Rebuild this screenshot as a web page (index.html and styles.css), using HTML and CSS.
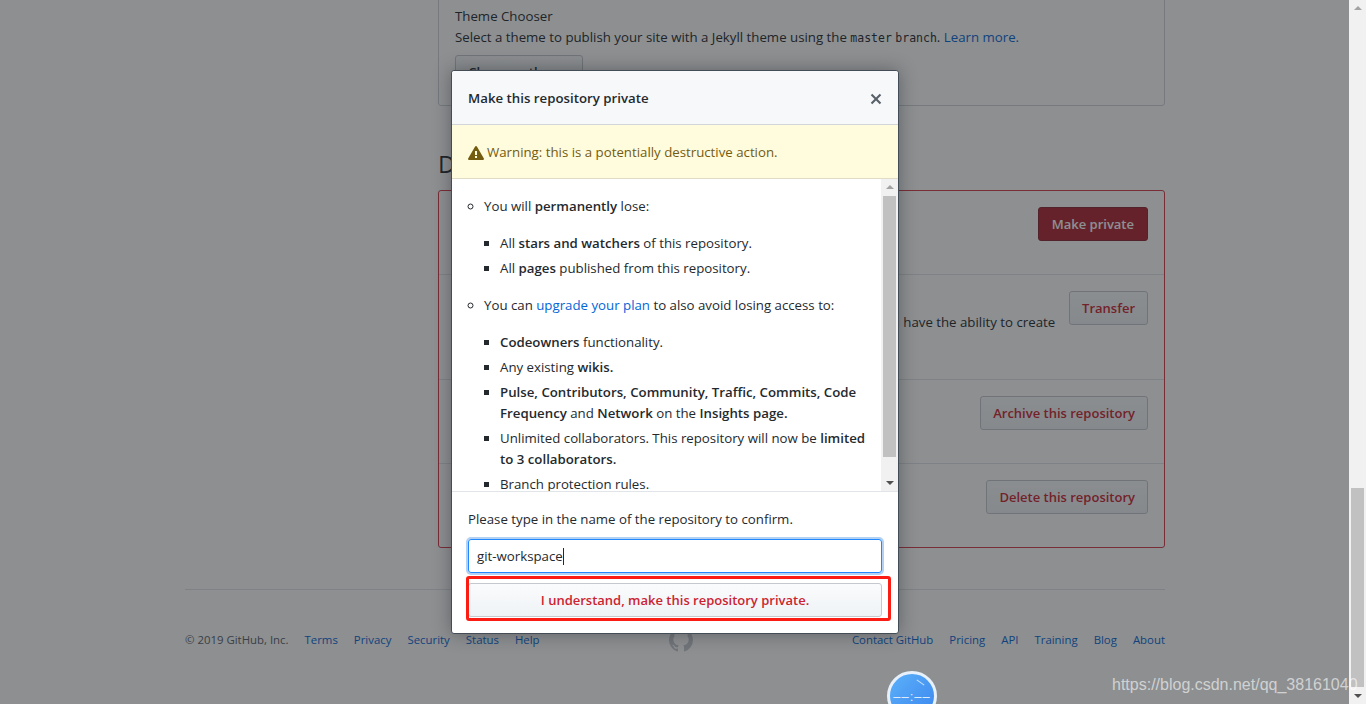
FILE: index.html
```html
<!DOCTYPE html>
<html lang="en">
<head>
  <meta charset="UTF-8">
  <title>Options</title>
  <link rel="stylesheet" href="styles.css">
</head>
<body>
  <div class="page">
    <div class="settings">
      <div class="box pages-box">
        <h4 class="row-title">Theme Chooser</h4>
        <p class="row-text">Select a theme to publish your site with a Jekyll theme using the <code>master</code> <code>branch</code>. <a href="#">Learn more.</a></p>
        <button class="btn">Choose a theme</button>
      </div>

      <h2 class="danger-title">Danger Zone</h2>
      <div class="box danger-box">
        <div class="danger-row">
          <div class="danger-info">
            <h4 class="row-title">Make this repository private</h4>
            <p class="row-text">Hide this repository from the public.</p>
          </div>
          <button class="btn btn-danger-solid">Make private</button>
        </div>
        <div class="danger-row">
          <div class="danger-info">
            <h4 class="row-title">Transfer ownership</h4>
            <p class="row-text">Transfer this repository to another user or to an organization where you have the ability to create repositories.</p>
          </div>
          <button class="btn btn-danger">Transfer</button>
        </div>
        <div class="danger-row">
          <div class="danger-info">
            <h4 class="row-title">Archive this repository</h4>
            <p class="row-text">Mark this repository as archived and read-only.</p>
          </div>
          <button class="btn btn-danger">Archive this repository</button>
        </div>
        <div class="danger-row">
          <div class="danger-info">
            <h4 class="row-title">Delete this repository</h4>
            <p class="row-text">Once you delete a repository, there is no going back.</p>
          </div>
          <button class="btn btn-danger">Delete this repository</button>
        </div>
      </div>
    </div>

    <footer class="footer">
      <div class="footer-links">
        <span>© 2019 GitHub, Inc.</span>
        <a href="#">Terms</a>
        <a href="#">Privacy</a>
        <a href="#">Security</a>
        <a href="#">Status</a>
        <a href="#">Help</a>
      </div>
      <svg class="footer-mark" viewBox="0 0 16 16" width="24" height="24">
        <path d="M8 0C3.58 0 0 3.58 0 8c0 3.54 2.29 6.53 5.47 7.59.4.07.55-.17.55-.38 0-.19-.01-.82-.01-1.49-2.01.37-2.53-.49-2.69-.94-.09-.23-.48-.94-.82-1.13-.28-.15-.68-.52-.01-.53.63-.01 1.08.58 1.23.82.72 1.21 1.87.87 2.33.66.07-.52.28-.87.51-1.07-1.78-.2-3.64-.89-3.64-3.95 0-.87.31-1.59.82-2.15-.08-.2-.36-1.02.08-2.12 0 0 .67-.21 2.2.82.64-.18 1.32-.27 2-.27.68 0 1.36.09 2 .27 1.53-1.04 2.2-.82 2.2-.82.44 1.1.16 1.92.08 2.12.51.56.82 1.27.82 2.15 0 3.07-1.87 3.75-3.65 3.95.29.25.54.73.54 1.48 0 1.07-.01 1.93-.01 2.2 0 .21.15.46.55.38A8.013 8.013 0 0016 8c0-4.42-3.58-8-8-8z"/>
      </svg>
      <div class="footer-links">
        <a href="#">Contact GitHub</a>
        <a href="#">Pricing</a>
        <a href="#">API</a>
        <a href="#">Training</a>
        <a href="#">Blog</a>
        <a href="#">About</a>
      </div>
    </footer>
  </div>

  <div class="overlay"></div>

  <div class="modal">
    <div class="modal-head">
      <h3>Make this repository private</h3>
      <svg class="modal-close" viewBox="0 0 12 16" width="12" height="16">
        <path d="M7.48 8l3.75 3.75-1.48 1.48L6 9.48l-3.75 3.75-1.48-1.48L4.52 8 .77 4.25l1.48-1.48L6 6.52l3.75-3.75 1.48 1.48L7.48 8z"/>
      </svg>
    </div>
    <div class="modal-warn">
      <svg viewBox="0 0 16 16" width="16" height="16">
        <path d="M8.893 1.5c-.183-.31-.52-.5-.887-.5s-.703.19-.886.5L.138 13.499a.98.98 0 000 1.001c.193.31.53.501.886.501h13.964c.367 0 .704-.19.877-.5a1.03 1.03 0 00.01-1.002L8.893 1.5zm.133 11.497H6.987v-2.003h2.039v2.003zm0-3.004H6.987V5.987h2.039v4.006z"/>
      </svg>
      <span>Warning: this is a potentially destructive action.</span>
    </div>
    <div class="modal-scroll">
      <div class="modal-body">
        <ul class="lose-list">
          <li>You will <b>permanently</b> lose:
            <ul>
              <li>All <b>stars and watchers</b> of this repository.</li>
              <li>All <b>pages</b> published from this repository.</li>
            </ul>
          </li>
          <li>You can <a href="#">upgrade your plan</a> to also avoid losing access to:
            <ul>
              <li><b>Codeowners</b> functionality.</li>
              <li>Any existing <b>wikis.</b></li>
              <li><b>Pulse, Contributors, Community, Traffic, Commits, Code Frequency</b> and <b>Network</b> on the <b>Insights page.</b></li>
              <li>Unlimited collaborators. This repository will now be <b>limited to 3 collaborators.</b></li>
              <li>Branch protection rules.</li>
            </ul>
          </li>
        </ul>
      </div>
      <div class="scrollbar modal-scrollbar">
        <span class="arrow-up"></span>
        <div class="thumb-track"><div class="thumb"></div></div>
        <span class="arrow-down"></span>
      </div>
    </div>
    <div class="modal-foot">
      <p>Please type in the name of the repository to confirm.</p>
      <div class="fake-input"><span>git-workspace</span><i class="caret"></i></div>
      <button class="btn btn-confirm">I understand, make this repository private.</button>
    </div>
  </div>

  <div class="red-mark"></div>

  <div class="timer"><span>––:––</span></div>

  <div class="scrollbar page-scrollbar">
    <span class="arrow-up"></span>
    <div class="thumb-track"><div class="thumb"></div></div>
    <span class="arrow-down"></span>
  </div>

  <div class="watermark">https://blog.csdn.net/qq_38161040</div>
</body>
</html>
```

FILE: styles.css
```css
html, body { margin: 0; height: 704px; overflow: hidden; }
body { background: #fff; color: #24292e; font-family: "Open Sans", "Noto Sans", sans-serif; font-size: 13.25px; line-height: 21px; }
a { color: #0366d6; text-decoration: none; }
h2, h3, h4, p, ul { margin: 0; padding: 0; }
button { font-family: inherit; }

.page { width: 980px; margin: 0 0 0 185px; }
.settings { margin-left: 253px; }

.box { border: 1px solid #d1d5da; border-radius: 3px; }
.pages-box { margin-top: -10px; padding: 15px 16px 16px; }
.row-title { font-size: 13.25px; font-weight: 400; }
.row-text code { font-family: "DejaVu Sans Mono", monospace; font-size: 11.5px; }

.btn { display: block; height: 34px; padding: 0 12px; font-size: 13px; font-weight: 600; line-height: 20px; border: 1px solid #c5c8cc; border-radius: 3px; background: linear-gradient(#fafbfc, #eff3f6); color: #24292e; white-space: nowrap; }
.pages-box .btn { width: 128px; margin-top: 6px; }
.btn-danger { color: #cb2431; }
.btn-danger-solid { padding: 0 13px; background: #b02533; border-color: #8d2530; color: #fff; }

.danger-title { margin-top: 43px; font-size: 24px; line-height: 30px; font-weight: 400; }
.danger-box { margin-top: 11px; border-color: #d73a49; }
.danger-row { display: flex; justify-content: space-between; align-items: flex-start; padding: 16px; border-top: 1px solid #e1e4e8; }
.danger-row:first-child { border-top: 0; }
.danger-info { width: 604px; padding-bottom: 9px; }
.danger-row .btn { flex: none; }

.footer { display: flex; justify-content: space-between; align-items: center; margin-top: 41px; padding-top: 38px; border-top: 1px solid #e1e4e8; font-size: 11.4px; line-height: 20px; }
.footer-links { display: flex; gap: 16px; }
.footer-links span { color: #586069; }
.footer-mark { margin-right: 30px; fill: #c6cbd1; }

.overlay { position: absolute; left: 0; top: 0; width: 1349px; height: 704px; background: rgba(27, 31, 35, .5); }

.modal { position: absolute; left: 451px; top: 70px; width: 446px; background: #fff; border: 1px solid #444d56; border-radius: 3px; box-shadow: 0 0 18px rgba(27, 31, 35, .4); }
.modal-head { display: flex; justify-content: space-between; align-items: center; box-sizing: border-box; height: 54px; padding: 2px 16px 0; background: #f6f8fa; border-bottom: 1px solid #d1d5da; border-radius: 3px 3px 0 0; }
.modal-head h3 { font-size: 13.25px; font-weight: 600; }
.modal-close { fill: #586069; }
.modal-warn { display: flex; align-items: center; gap: 3px; box-sizing: border-box; height: 54px; padding: 2px 16px 0; background: #fffbdd; border-bottom: 1px solid #e0dcc5; color: #735c0f; }
.modal-warn svg { fill: #735c0f; }

.modal-scroll { display: flex; height: 312px; border-bottom: 1px solid #e1e4e8; }
.modal-body { flex: 1; height: 312px; padding: 17px 8px 0 16px; box-sizing: border-box; overflow: hidden; }
.lose-list { padding-left: 16px; list-style: circle; }
.lose-list > li + li { margin-top: 16px; }
.lose-list ul { margin-top: 16px; padding-left: 16px; list-style: square; }
.lose-list ul li + li { margin-top: 4px; }
.lose-list b { font-weight: 600; }

.scrollbar { display: flex; flex-direction: column; align-items: center; width: 17px; background: #f1f1f1; }
.thumb-track { flex: 1; width: 100%; }
.thumb { width: 13px; margin: 0 auto; background: #c1c1c1; }
.arrow-up, .arrow-down { display: block; width: 0; height: 0; border-left: 4px solid transparent; border-right: 4px solid transparent; }
.arrow-up { margin: 6px 0 7px; border-bottom: 4px solid #a3a3a3; }
.arrow-down { margin: 6px 0; border-top: 4px solid #505050; }
.modal-scrollbar .thumb { height: 261px; }
.page-scrollbar { position: absolute; right: 0; top: 0; height: 704px; }
.page-scrollbar .thumb { height: 199px; margin-top: 471px; }

.modal-foot { padding: 16px; }
.modal-foot p { margin-top: 1px; }
.fake-input { display: flex; align-items: center; height: 32px; margin-top: 9px; padding: 0 8px; border: 1px solid #2188ff; border-radius: 3px; box-shadow: 0 0 0 2px rgba(3, 102, 214, .3); }
.caret { width: 1px; height: 17px; background: #24292e; }
.btn-confirm { width: 100%; margin-top: 10px; color: #cb2431; font-weight: 600; border-color: #c5c8cc; }

.red-mark { position: absolute; left: 466px; top: 576px; width: 419px; height: 39px; border: 3px solid #fb1d14; border-radius: 3px; }

.timer { position: absolute; left: 887px; top: 671px; box-sizing: border-box; width: 50px; height: 50px; border: 3px solid #e8f1fb; border-radius: 50%; background: linear-gradient(135deg, #5cb0fa, #3a86ee); color: #e6f0fc; font-family: "Liberation Sans", sans-serif; font-size: 13px; letter-spacing: 1px; line-height: 46px; text-align: center; }
.timer::before { content: ""; position: absolute; left: 26px; top: 8px; width: 9px; height: 1px; background: rgba(255, 255, 255, .7); transform: rotate(35deg); }

.watermark { position: absolute; left: 1112px; top: 675px; font-family: "Liberation Sans", sans-serif; font-size: 16px; line-height: 20px; color: rgba(255, 255, 255, .6); white-space: nowrap; }
```
